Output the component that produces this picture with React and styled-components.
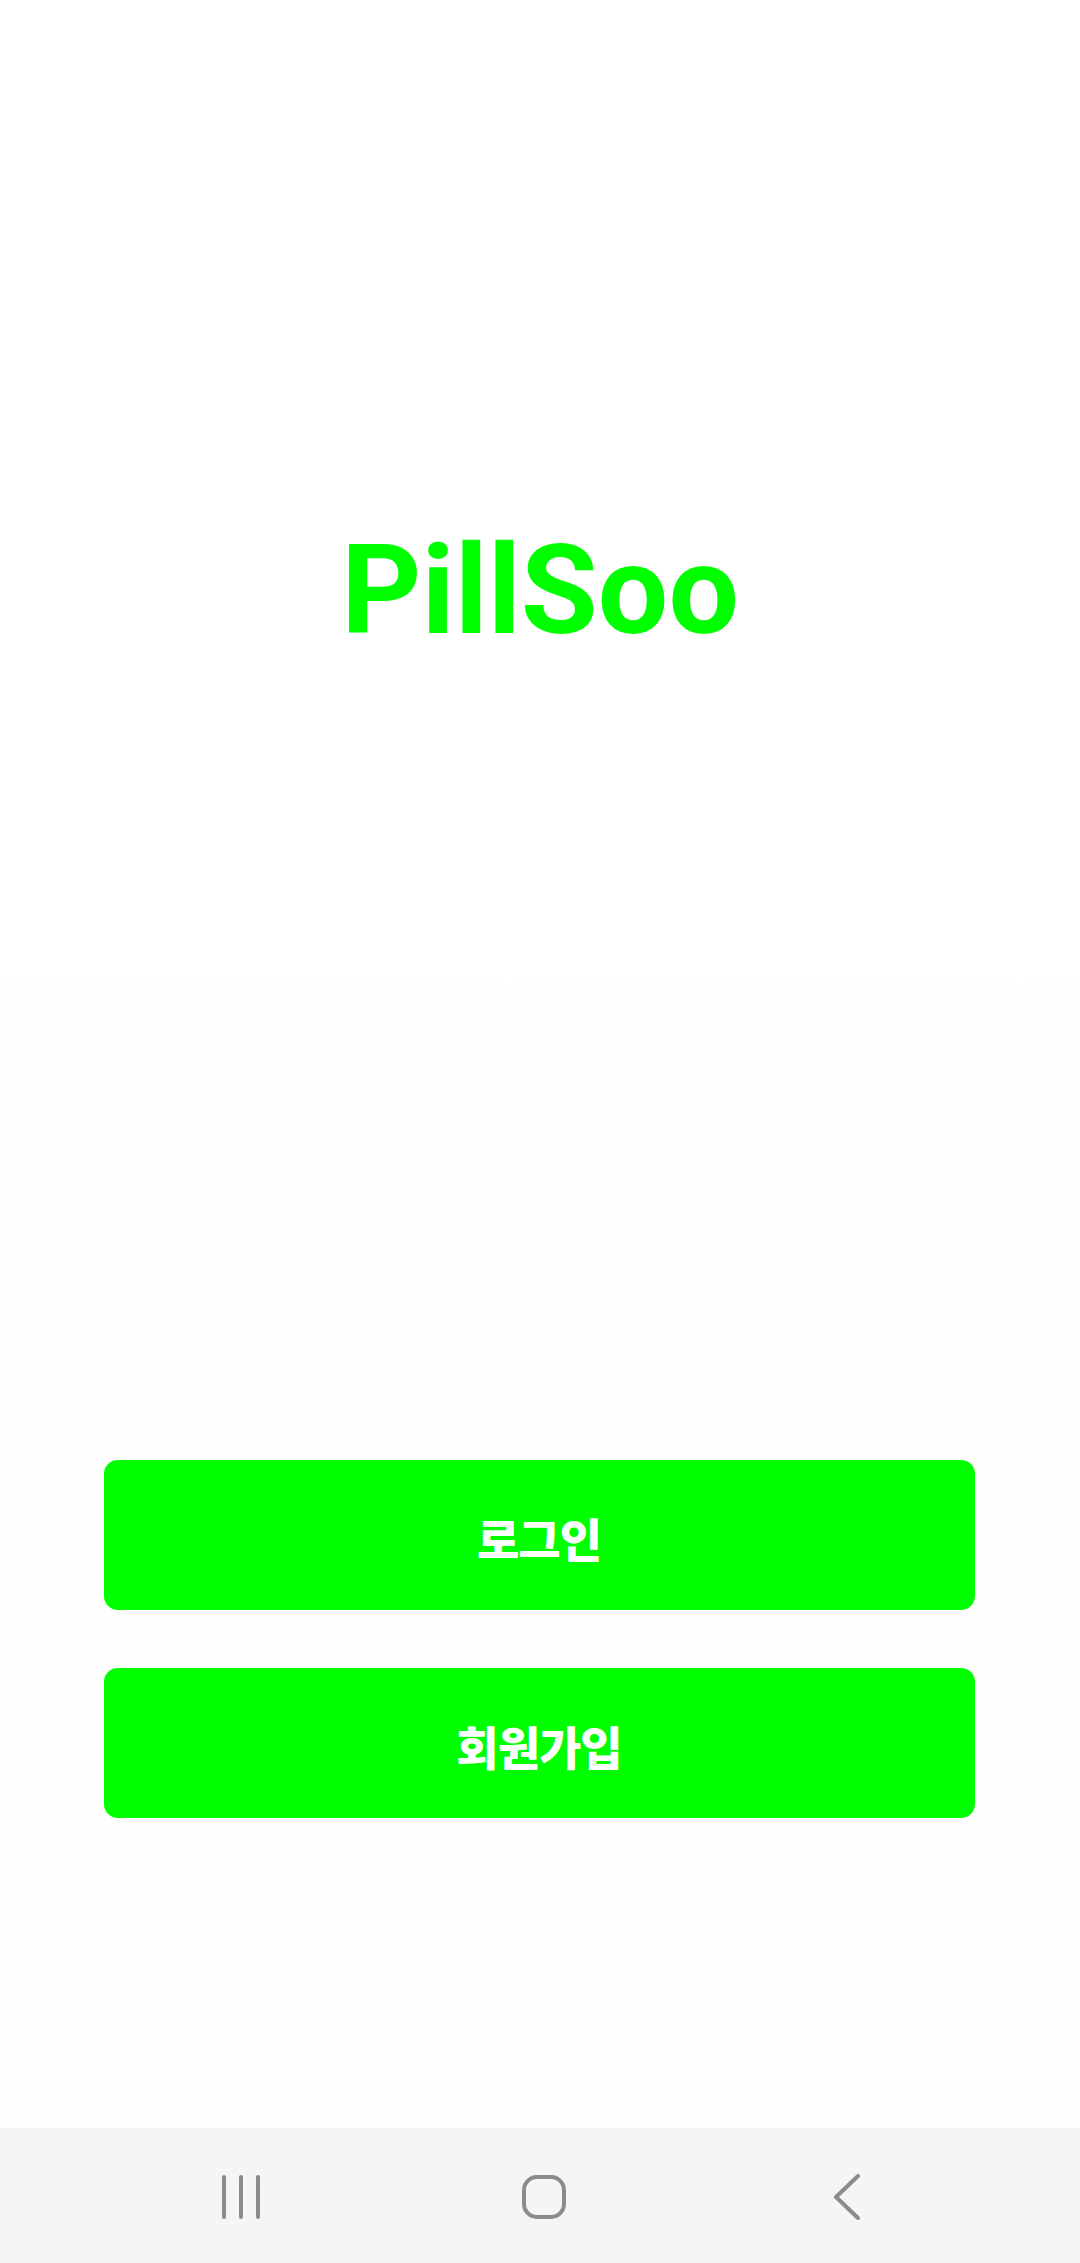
import React from "react";
import styled, { createGlobalStyle } from "styled-components";

const GlobalStyle = createGlobalStyle`
  html, body {
    margin: 0;
    padding: 0;
    background: #ffffff;
  }
  * {
    box-sizing: border-box;
  }
`;

const Page = styled.div`
  width: 1080px;
  height: 2263px;
  display: flex;
  flex-direction: column;
  background: #ffffff;
  overflow: hidden;
`;

const Screen = styled.main`
  flex: 1;
  display: flex;
  flex-direction: column;
  align-items: center;
  padding-top: 528px;
  background: linear-gradient(#ffffff 40%, #fdfdfd);
`;

const Logo = styled.h1`
  margin: 0;
  font-family: Roboto, "Liberation Sans", sans-serif;
  font-weight: 700;
  font-size: 125px;
  line-height: 125px;
  color: #00ff00;
  letter-spacing: 0;
`;

const Actions = styled.div`
  width: 871px;
  margin-top: 807px;
  margin-right: 2px;
  display: flex;
  flex-direction: column;
  gap: 58px;
`;

const Button = styled.button`
  height: 150px;
  width: 100%;
  border: none;
  border-radius: 14px;
  background: #00ff00;
  color: #ffffff;
  font-family: "Noto Sans CJK KR", "Noto Sans", sans-serif;
  font-weight: 900;
  font-size: 46px;
  letter-spacing: -1px;
  padding-top: 4px;
  cursor: pointer;
  display: flex;
  align-items: center;
  justify-content: center;
`;

const NavBar = styled.nav`
  height: 135px;
  flex-shrink: 0;
  background: #f5f5f7;
  display: grid;
  grid-template-columns: repeat(3, 303px);
  justify-content: center;
  align-items: center;
  justify-items: center;
  padding-left: 8px;
  padding-top: 2px;
  color: #8b8b8b;
`;

const NavIcon = styled.svg`
  display: block;
  fill: none;
  stroke: currentColor;
  stroke-width: 4;
  stroke-linecap: round;
  stroke-linejoin: round;
`;

function RecentsIcon() {
  return (
    <NavIcon width="40" height="44" viewBox="0 0 40 44">
      <line x1="3" y1="2" x2="3" y2="42" />
      <line x1="20" y1="2" x2="20" y2="42" />
      <line x1="37" y1="2" x2="37" y2="42" />
    </NavIcon>
  );
}

function HomeIcon() {
  return (
    <NavIcon width="44" height="44" viewBox="0 0 44 44">
      <rect x="2" y="2" width="40" height="40" rx="13" />
    </NavIcon>
  );
}

function BackIcon() {
  return (
    <NavIcon width="28" height="46" viewBox="0 0 28 46">
      <polyline points="25,2 3,23 25,44" />
    </NavIcon>
  );
}

export default function App() {
  return (
    <>
      <GlobalStyle />
      <Page>
        <Screen>
          <Logo>PillSoo</Logo>
          <Actions>
            <Button type="button">로그인</Button>
            <Button type="button">회원가입</Button>
          </Actions>
        </Screen>
        <NavBar>
          <RecentsIcon />
          <HomeIcon />
          <BackIcon />
        </NavBar>
      </Page>
    </>
  );
}
